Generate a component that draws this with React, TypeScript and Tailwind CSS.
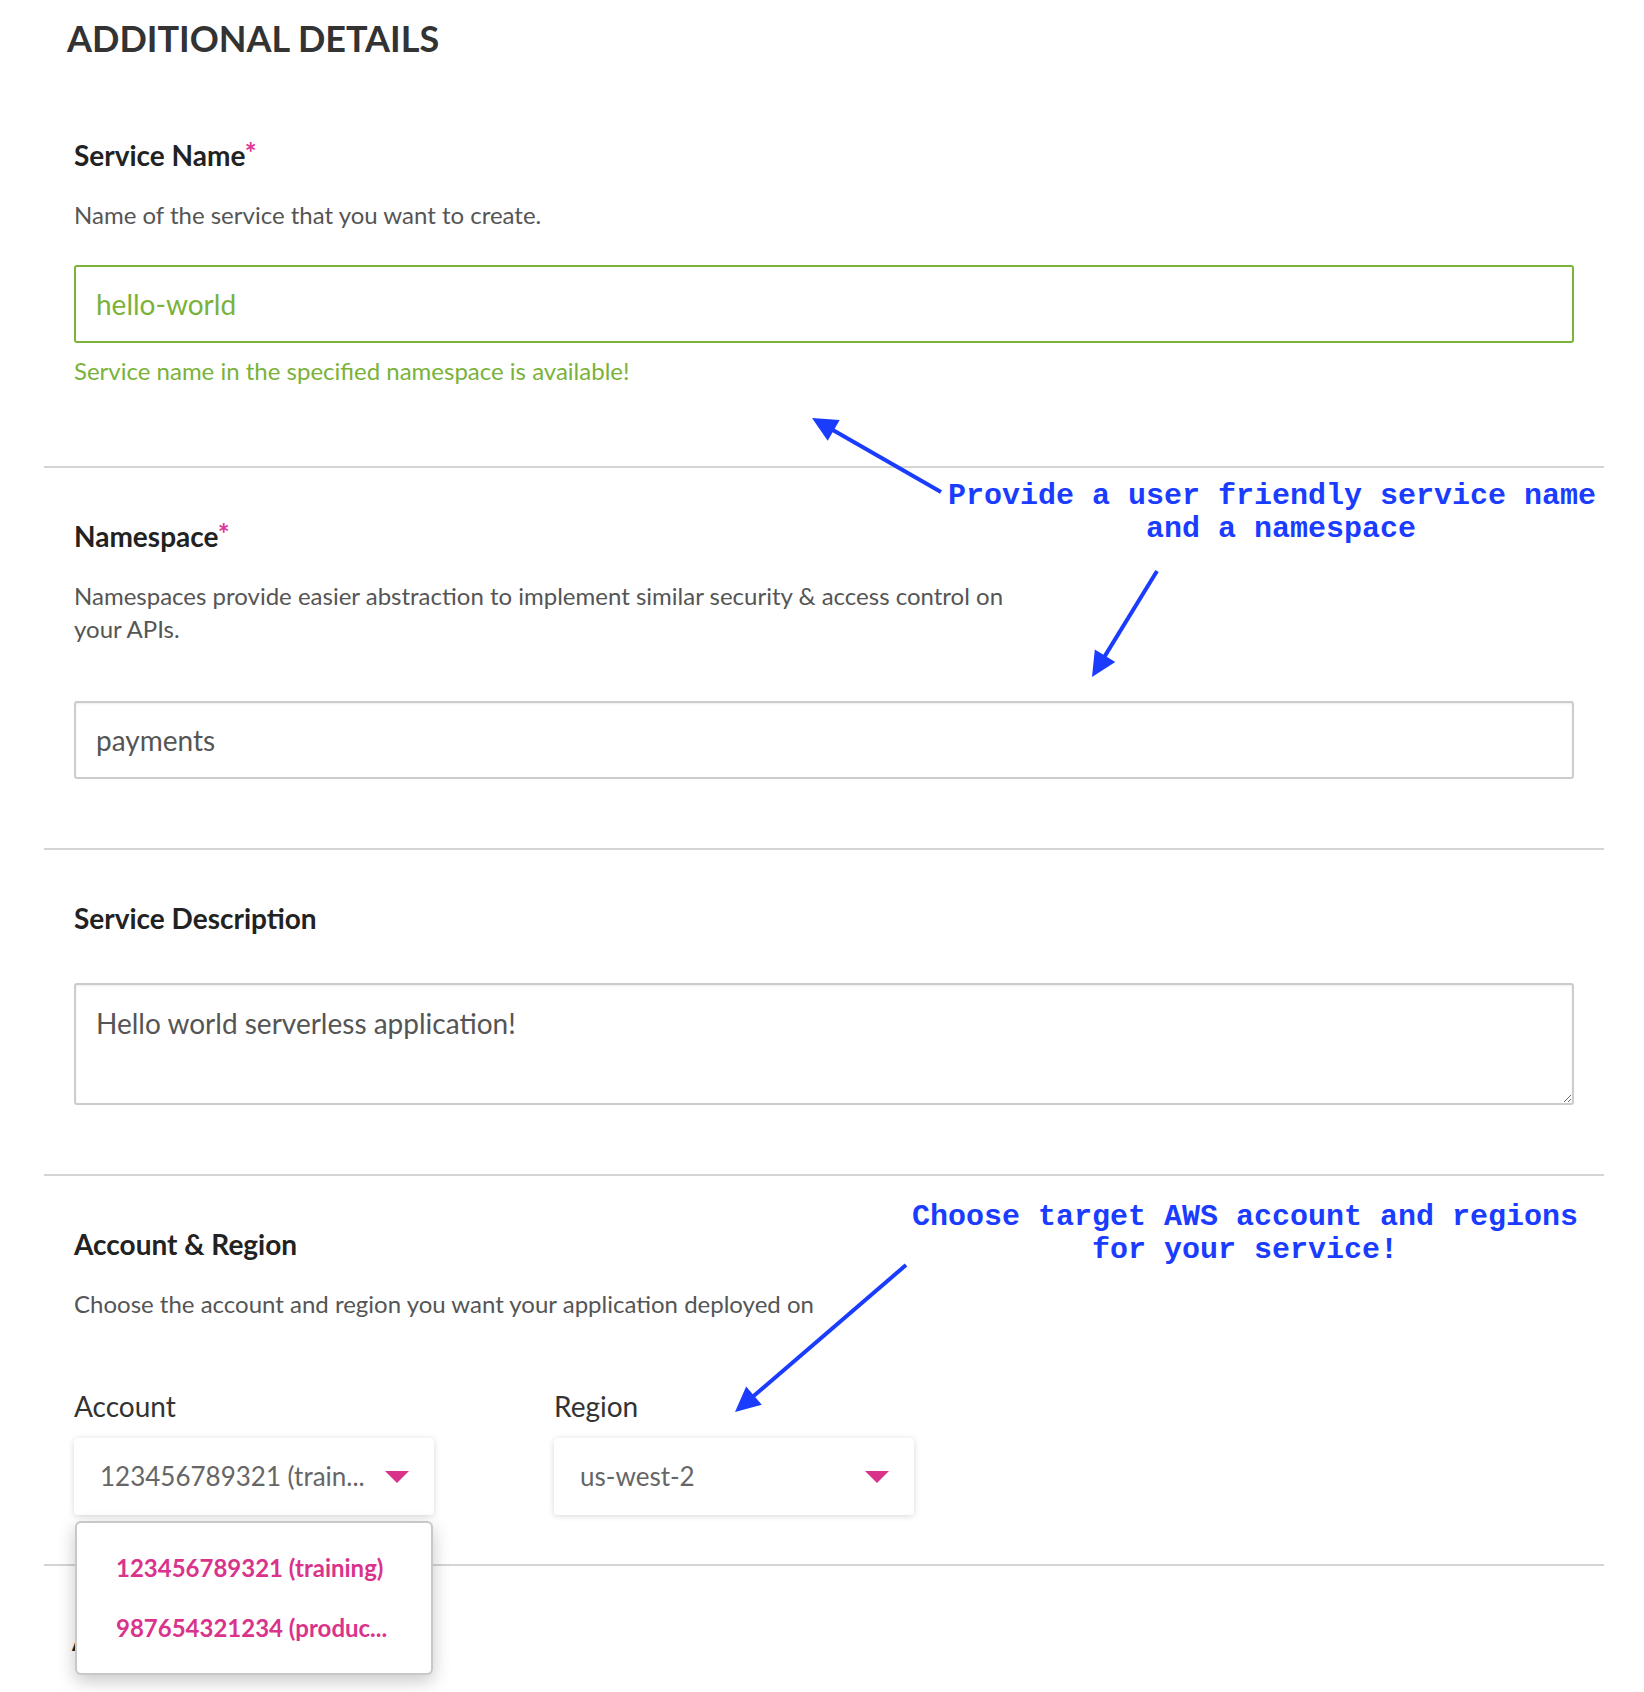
import React from "react";

const PINK = "#d9338b";

function Arrow({ x1, y1, x2, y2 }: { x1: number; y1: number; x2: number; y2: number }) {
  const dx = x2 - x1;
  const dy = y2 - y1;
  const len = Math.sqrt(dx * dx + dy * dy);
  const ux = dx / len;
  const uy = dy / len;
  const headLen = 25;
  const headW = 12;
  const bx = x2 - ux * headLen;
  const by = y2 - uy * headLen;
  const px = -uy;
  const py = ux;
  const pts = `${x2},${y2} ${bx + px * headW},${by + py * headW} ${bx - px * headW},${by - py * headW}`;
  return (
    <g>
      <line x1={x1} y1={y1} x2={bx + ux * 2} y2={by + uy * 2} stroke="#1a3cff" strokeWidth={4} strokeLinecap="butt" />
      <polygon points={pts} fill="#1a3cff" />
    </g>
  );
}

function Triangle() {
  return (
    <svg width="24" height="12" viewBox="0 0 24 12" className="shrink-0">
      <polygon points="0,0 24,0 12,12" fill={PINK} />
    </svg>
  );
}

function Section({ children, className }: { children: React.ReactNode; className: string }) {
  return <div className={className}>{children}</div>;
}

export default function App() {
  return (
    <div className="relative w-[1644px] h-[1692px] overflow-hidden bg-white font-['Lato','Noto_Sans',sans-serif]">
      <h1 className="pl-[67px] pt-[17px] text-[36px] leading-[43px] font-bold text-[#333333]">ADDITIONAL DETAILS</h1>

      <div className="ml-[44px] mr-[40px] mt-[77px]">
        {/* Service Name */}
        <Section className="px-[30px] pb-[79px]">
          <h2 className="text-[28px] leading-[36px] font-bold text-[#222222]">
            Service Name<span className="relative top-[-3px] text-[#e0369a]">*</span>
          </h2>
          <p className="mt-[25px] text-[24px] leading-[33px] text-[#555555]">Name of the service that you want to create.</p>
          <input
            readOnly
            defaultValue="hello-world"
            className="mt-[34px] block h-[78px] w-full rounded-[3px] border-2 border-[#7ab23a] px-[20px] text-[28px] text-[#7ab23a] outline-none"
          />
          <p className="mt-[11px] text-[24px] leading-[33px] text-[#7ab23a]">Service name in the specified namespace is available!</p>
        </Section>

        {/* Namespace */}
        <Section className="border-t-2 border-[#d4d4d4] px-[30px] pt-[50px] pb-[69px]">
          <h2 className="text-[28px] leading-[36px] font-bold text-[#222222]">
            Namespace<span className="relative top-[-3px] text-[#e0369a]">*</span>
          </h2>
          <p className="mt-[25px] text-[24px] leading-[33px] text-[#555555]">
            Namespaces provide easier abstraction to implement similar security &amp; access control on
            <br />
            your APIs.
          </p>
          <input
            readOnly
            defaultValue="payments"
            className="mt-[56px] block h-[78px] w-full rounded-[3px] border-2 border-[#cccccc] px-[20px] text-[28px] text-[#555555] outline-none shadow-[inset_0_1px_2px_rgba(0,0,0,0.08)]"
          />
        </Section>

        {/* Service Description */}
        <Section className="border-t-2 border-[#d4d4d4] px-[30px] pt-[50px] pb-[69px]">
          <h2 className="text-[28px] leading-[36px] font-bold text-[#222222]">Service Description</h2>
          <textarea
            readOnly
            defaultValue="Hello world serverless application!"
            className="mt-[47px] block h-[122px] w-full rounded-[3px] border-2 border-[#cccccc] px-[20px] pt-[20px] text-[28px] leading-[36px] text-[#555555] outline-none shadow-[inset_0_1px_2px_rgba(0,0,0,0.08)]"
          />
        </Section>

        {/* Account & Region */}
        <Section className="border-t-2 border-[#d4d4d4] px-[30px] pt-[50px] pb-[49px]">
          <h2 className="text-[28px] leading-[36px] font-bold text-[#222222]">Account &amp; Region</h2>
          <p className="mt-[25px] text-[24px] leading-[33px] text-[#555555]">
            Choose the account and region you want your application deployed on
          </p>
          <div className="mt-[68px] flex gap-[120px]">
            <div className="w-[360px]">
              <div className="text-[28px] leading-[36px] text-[#333333]">Account</div>
              <div className="relative mt-[14px]">
                <div className="flex h-[77px] items-center justify-between rounded-[4px] bg-white pl-[26px] pr-[25px] shadow-[0_1px_6px_rgba(0,0,0,0.16)]">
                  <span className="whitespace-nowrap text-[26px] text-[#666666]">123456789321 (train...</span>
                  <Triangle />
                </div>
                <div className="absolute left-[1px] top-full z-10 mt-[6px] w-[358px] rounded-[6px] border-2 border-[#c8c8c8] bg-white py-[15px] shadow-[0_6px_18px_rgba(0,0,0,0.22)]">
                  <div className="flex h-[60px] items-center pl-[39px] text-[24px] font-bold text-[#d9338b] whitespace-nowrap">123456789321 (training)</div>
                  <div className="flex h-[60px] items-center pl-[39px] text-[24px] font-bold text-[#d9338b] whitespace-nowrap">987654321234 (produc...</div>
                </div>
              </div>
            </div>
            <div className="w-[360px]">
              <div className="text-[28px] leading-[36px] text-[#333333]">Region</div>
              <div className="mt-[14px] flex h-[77px] items-center justify-between rounded-[4px] bg-white pl-[26px] pr-[25px] shadow-[0_1px_6px_rgba(0,0,0,0.16)]">
                <span className="whitespace-nowrap text-[26px] text-[#666666]">us-west-2</span>
                <Triangle />
              </div>
            </div>
          </div>
        </Section>

        {/* Next section (mostly hidden) */}
        <Section className="border-t-2 border-[#d4d4d4] pl-[28px] pr-[30px] pt-[56px] pb-[40px]">
          <h2 className="text-[28px] leading-[36px] font-bold text-[#222222]">Application Type</h2>
        </Section>
      </div>

      {/* Annotations */}
      <svg className="pointer-events-none absolute left-0 top-0" width="1644" height="1692">
        <Arrow x1={941} y1={492} x2={812} y2={418} />
        <Arrow x1={1157} y1={571} x2={1092} y2={677} />
        <Arrow x1={906} y1={1265} x2={735} y2={1412} />
      </svg>

      <div className="pointer-events-none absolute left-[948px] top-[480px] font-['Liberation_Mono','Courier_New',monospace] text-[30px] font-bold leading-[33px] text-[#1a3cff] whitespace-nowrap">
        <div>Provide a user friendly service name</div>
        <div className="pl-[198px]">and a namespace</div>
      </div>

      <div className="pointer-events-none absolute left-[912px] top-[1201px] w-[666px] text-center font-['Liberation_Mono','Courier_New',monospace] text-[30px] font-bold leading-[33px] text-[#1a3cff] whitespace-nowrap">
        <div>Choose target AWS account and regions</div>
        <div>for your service!</div>
      </div>
    </div>
  );
}
